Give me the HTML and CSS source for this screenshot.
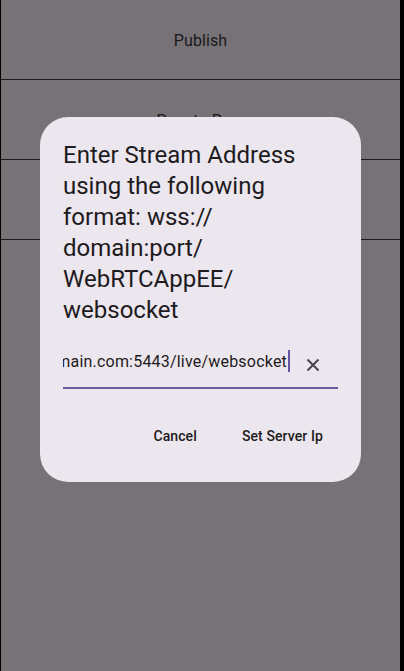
FILE: index.html
```html
<!DOCTYPE html>
<html>
<head>
<meta charset="utf-8">
<link rel="stylesheet" href="styles.css">
</head>
<body>
<div class="app">
  <div class="row">Publish</div>
  <div class="row">Peer to Peer</div>
  <div class="row"></div>
</div>
<div class="dialog">
  <div class="title">Enter Stream Address using the following format: wss:// domain:port/ WebRTCAppEE/ websocket</div>
  <div class="field">
    <div class="value"><span class="text">wss://domain.com:5443/live/websocket</span><span class="caret"></span></div>
    <svg class="clear" width="24" height="24" viewBox="0 0 24 24"><path d="M6.5 6.5 L17.5 17.5 M17.5 6.5 L6.5 17.5" stroke="#49454f" stroke-width="2" fill="none"/></svg>
  </div>
  <div class="actions">
    <div class="btn cancel">Cancel</div>
    <div class="btn ok">Set Server Ip</div>
  </div>
</div>
</body>
</html>
```
FILE: styles.css
```css
html, body {
  margin: 0;
  padding: 0;
  height: 100%;
  background: #000;
  font-family: Roboto, "Noto Sans", sans-serif;
}
.app {
  margin-left: 1px;
  width: 399px;
  height: 671px;
  background: #777276;
}
.row {
  height: 80px;
  border-bottom: 1px solid #1f1d20;
  display: flex;
  align-items: center;
  justify-content: center;
  font-size: 16px;
  color: #1a181b;
  padding-top: 1px;
  box-sizing: border-box;
  letter-spacing: 0.1px;
}
.dialog {
  position: absolute;
  left: 40px;
  top: 117px;
  width: 321px;
  height: 365px;
  box-sizing: border-box;
  background: #ece6ee;
  border-radius: 28px;
  padding: 23px 24px 24px 23px;
  display: flex;
  flex-direction: column;
}
.title {
  font-size: 24px;
  line-height: 31px;
  color: #1d1b20;
  padding-right: 30px;
}
.field {
  margin-top: 11px;
  height: 50px;
  border-bottom: 2px solid #6a5a9e;
  display: flex;
  align-items: center;
  width: 275px;
}
.value {
  flex: 1;
  overflow: hidden;
  display: flex;
  justify-content: flex-end;
  align-items: center;
  white-space: nowrap;
  font-size: 16px;
  letter-spacing: 0.2px;
  color: #1d1b20;
  padding-right: 11px;
  padding-bottom: 2px;
}
.caret {
  display: inline-block;
  width: 2px;
  height: 22px;
  background: #6750a4;
  margin-left: 1px;
  flex: none;
}
.clear {
  flex: none;
  margin-right: 13px;
  margin-top: 6px;
}
.actions {
  margin-top: auto;
  display: flex;
  justify-content: flex-end;
  align-items: center;
  height: 40px;
  margin-bottom: 2px;
}
.btn {
  font-size: 14px;
  font-weight: 500;
  color: #1d1b20;
  letter-spacing: 0.1px;
  padding: 0 12px;
  line-height: 40px;
}
.cancel {
  margin-right: 21px;
}
.ok {
  margin-right: 2px;
}
```
